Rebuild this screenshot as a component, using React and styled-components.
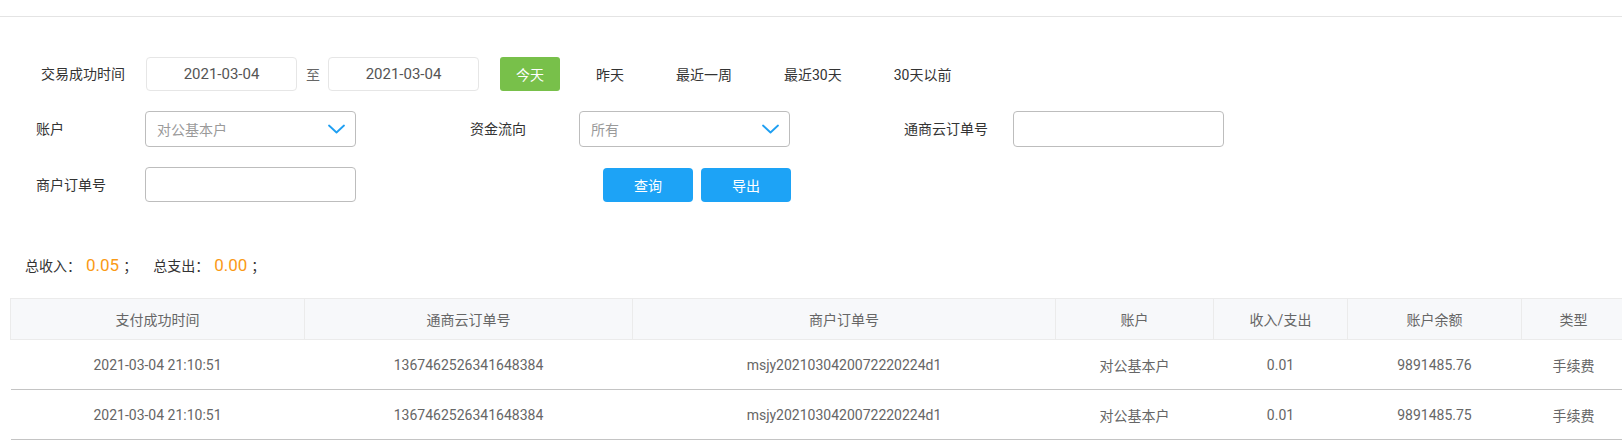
import React from "react";
import styled, { createGlobalStyle } from "styled-components";

const quickRanges = ["昨天", "最近一周", "最近30天", "30天以前"];

const columns = [
  { title: "支付成功时间", key: "time", width: 294 },
  { title: "通商云订单号", key: "orderNo", width: 328 },
  { title: "商户订单号", key: "bizOrderNo", width: 423 },
  { title: "账户", key: "account", width: 158 },
  { title: "收入/支出", key: "amount", width: 134 },
  { title: "账户余额", key: "balance", width: 174 },
  { title: "类型", key: "type", width: 104 },
];

const rows = [
  {
    time: "2021-03-04 21:10:51",
    orderNo: "1367462526341648384",
    bizOrderNo: "msjy2021030420072220224d1",
    account: "对公基本户",
    amount: "0.01",
    balance: "9891485.76",
    type: "手续费",
  },
  {
    time: "2021-03-04 21:10:51",
    orderNo: "1367462526341648384",
    bizOrderNo: "msjy2021030420072220224d1",
    account: "对公基本户",
    amount: "0.01",
    balance: "9891485.75",
    type: "手续费",
  },
];

const Chevron = () => (
  <svg width="17" height="10" viewBox="0 0 17 10" fill="none">
    <polyline
      points="1,1.5 8.5,8.5 16,1.5"
      stroke="#1e9ff2"
      strokeWidth="1.8"
      strokeLinecap="round"
      strokeLinejoin="round"
    />
  </svg>
);

const App = () => {
  return (
    <>
      <GlobalStyle />
      <TopBar />
      <FilterPanel>
        <FormRow>
          <Label indent={5} wide>
            交易成功时间
          </Label>
          <DateBox>2021-03-04</DateBox>
          <RangeSep>至</RangeSep>
          <DateBox>2021-03-04</DateBox>
          <QuickButton active>今天</QuickButton>
          {quickRanges.map((r) => (
            <QuickButton key={r}>{r}</QuickButton>
          ))}
        </FormRow>
        <FormGrid>
          <FormItem>
            <Label>账户</Label>
            <SelectBox>
              <Placeholder>对公基本户</Placeholder>
              <Chevron />
            </SelectBox>
          </FormItem>
          <FormItem>
            <Label>资金流向</Label>
            <SelectBox>
              <Placeholder>所有</Placeholder>
              <Chevron />
            </SelectBox>
          </FormItem>
          <FormItem>
            <Label>通商云订单号</Label>
            <TextInput />
          </FormItem>
        </FormGrid>
        <FormGrid>
          <FormItem short>
            <Label>商户订单号</Label>
            <TextInput />
          </FormItem>
          <ActionGroup>
            <ActionButton>查询</ActionButton>
            <ActionButton>导出</ActionButton>
          </ActionGroup>
        </FormGrid>
      </FilterPanel>
      <Summary>
        <SummaryItem>
          总收入：<Amount>0.05</Amount>；
        </SummaryItem>
        <SummaryItem>
          总支出：<Amount>0.00</Amount>；
        </SummaryItem>
      </Summary>
      <TableWrap>
        <Table>
          <colgroup>
            {columns.map((c) => (
              <col key={c.key} style={{ width: c.width }} />
            ))}
          </colgroup>
          <thead>
            <tr>
              {columns.map((c) => (
                <Th key={c.key}>{c.title}</Th>
              ))}
            </tr>
          </thead>
          <tbody>
            {rows.map((row, idx) => (
              <tr key={idx}>
                {columns.map((c) => (
                  <Td key={c.key}>{row[c.key]}</Td>
                ))}
              </tr>
            ))}
          </tbody>
        </Table>
      </TableWrap>
    </>
  );
};

export default App;

const GlobalStyle = createGlobalStyle`
  html, body {
    margin: 0;
    padding: 0;
    background: #fff;
    overflow-x: hidden;
  }
  body {
    font-family: Roboto, "Noto Sans CJK SC", sans-serif;
    font-size: 14px;
    color: #333;
  }
`;
const TopBar = styled.div`
  height: 16px;
  border-bottom: 1px solid #e4e4e4;
`;
const FilterPanel = styled.div`
  display: flex;
  flex-direction: column;
  gap: 20px;
  padding: 40px 0 0 36px;
`;
const FormRow = styled.div`
  display: flex;
  align-items: center;
  height: 34px;
`;
const FormGrid = styled.div`
  display: grid;
  grid-template-columns: repeat(3, 434px);
  align-items: center;
`;
const FormItem = styled.div`
  display: flex;
  align-items: center;
  height: ${({ short }) => (short ? "35px" : "36px")};
`;
const Label = styled.span`
  flex: none;
  width: ${({ wide }) => (wide ? 110 : 109)}px;
  padding-left: ${({ indent }) => indent || 0}px;
  box-sizing: border-box;
  color: #333;
  line-height: 20px;
  white-space: nowrap;
`;
const DateBox = styled.div`
  width: 151px;
  height: 34px;
  box-sizing: border-box;
  border: 1px solid #e6e6e6;
  border-radius: 4px;
  display: flex;
  align-items: center;
  justify-content: center;
  font-size: 15px;
  color: #555;
`;
const RangeSep = styled.span`
  margin: 0 8px 0 9px;
  color: #666;
`;
const QuickButton = styled.button`
  height: 34px;
  margin-left: ${({ active }) => (active ? 21 : 20)}px;
  min-width: 60px;
  padding: 0 16px;
  border: none;
  border-radius: 3px;
  font: inherit;
  color: ${({ active }) => (active ? "#fff" : "#333")};
  background: ${({ active }) => (active ? "#78c04a" : "transparent")};
  cursor: pointer;
`;
const SelectBox = styled.div`
  width: 211px;
  height: 100%;
  box-sizing: border-box;
  border: 1px solid #bdbdbd;
  border-radius: 4px;
  display: flex;
  align-items: center;
  justify-content: space-between;
  padding: 0 10px 0 11px;
`;
const Placeholder = styled.span`
  color: #9a9a9a;
`;
const TextInput = styled.input`
  width: 211px;
  height: 100%;
  box-sizing: border-box;
  border: 1px solid #bdbdbd;
  border-radius: 4px;
  padding: 0 11px;
  font: inherit;
  outline: none;
`;
const ActionGroup = styled.div`
  display: flex;
  gap: 8px;
  padding-left: 133px;
`;
const ActionButton = styled.button`
  width: 90px;
  height: 34px;
  border: none;
  border-radius: 4px;
  background: #1da3f6;
  color: #fff;
  font: inherit;
  cursor: pointer;
`;
const Summary = styled.div`
  display: flex;
  align-items: center;
  height: 24px;
  margin-top: 51px;
  padding-left: 25px;
  color: #333;
`;
const SummaryItem = styled.span`
  display: flex;
  align-items: center;
  margin-right: 16px;
  white-space: pre;
`;
const Amount = styled.span`
  font-size: 17px;
  color: #fa9a16;
  margin: 0 4px 0 5px;
`;
const TableWrap = styled.div`
  margin: 21px 0 0 10px;
`;
const Table = styled.table`
  border-collapse: collapse;
  table-layout: fixed;
  width: 1615px;
`;
const Th = styled.th`
  height: 40px;
  padding: 0;
  background: #f7f8fa;
  border: 1px solid #ebebeb;
  font-weight: normal;
  color: #666;
  text-align: center;
`;
const Td = styled.td`
  height: 49px;
  padding: 0;
  border-bottom: 1px solid #c4c4c4;
  color: #666;
  text-align: center;
`;
